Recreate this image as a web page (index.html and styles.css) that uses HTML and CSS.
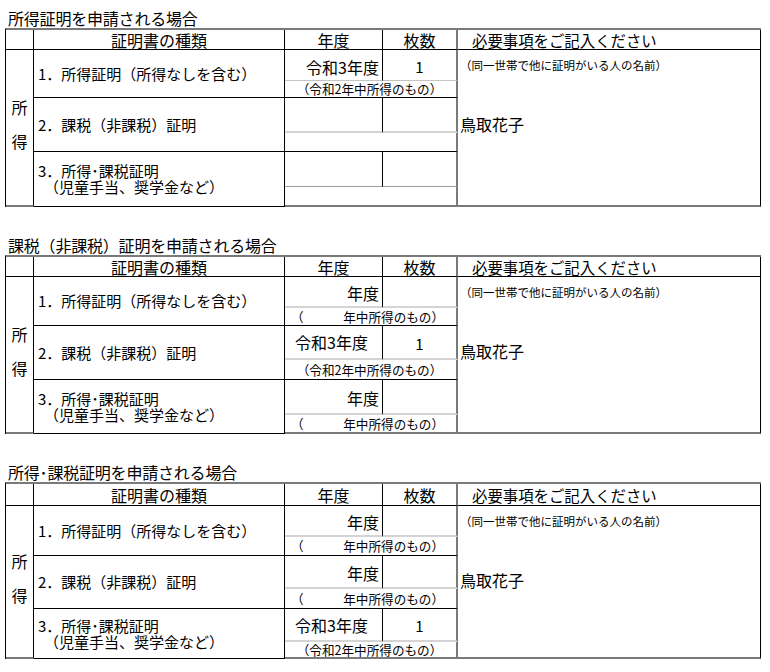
FILE: index.html
```html
<!DOCTYPE html>
<html lang="ja">
<head>
<meta charset="utf-8">
<title>証明書の種類</title>
<link rel="stylesheet" href="styles.css">
</head>
<body>
<div class="page">

  <section class="section">
    <div class="title">所得証明を申請される場合</div>
    <div class="sheet t1">
      <div class="c hd"></div>
      <div class="c hd">証明書の種類</div>
      <div class="c hd">年度</div>
      <div class="c hd thick">枚数</div>
      <div class="c hd left">必要事項をご記入ください</div>

      <div class="c vlabel bottom"><span>所</span><span>得</span></div>
      <div class="c item"><span class="line1">1．所得証明（所得なしを含む）</span></div>
      <div class="c year div-thin">令和3年度</div>
      <div class="c count thick div-thin">1</div>
      <div class="c notes bottom">
        <div class="hint">（同一世帯で他に証明がいる人の名前）</div>
        <div class="name">鳥取花子</div>
      </div>
      <div class="c sub thick filled">（令和2年中所得のもの）</div>

      <div class="c item"><span class="line1">2．課税（非課税）証明</span></div>
      <div class="c year"></div>
      <div class="c count thick"></div>
      <div class="c sub thick"></div>

      <div class="c item"><span class="line1">3．所得･課税証明</span><span class="line2">（児童手当、奨学金など）</span></div>
      <div class="c year div-mid"></div>
      <div class="c count thick div-mid"></div>
      <div class="c sub thick bottom"></div>
    </div>
  </section>

  <section class="section">
    <div class="title">課税（非課税）証明を申請される場合</div>
    <div class="sheet t2">
      <div class="c hd"></div>
      <div class="c hd">証明書の種類</div>
      <div class="c hd">年度</div>
      <div class="c hd thick">枚数</div>
      <div class="c hd left">必要事項をご記入ください</div>

      <div class="c vlabel bottom"><span>所</span><span>得</span></div>
      <div class="c item"><span class="line1">1．所得証明（所得なしを含む）</span></div>
      <div class="c year">年度</div>
      <div class="c count thick"></div>
      <div class="c notes bottom">
        <div class="hint">（同一世帯で他に証明がいる人の名前）</div>
        <div class="name">鳥取花子</div>
      </div>
      <div class="c sub thick blank"><span>（</span><span>年中所得のもの）</span></div>

      <div class="c item"><span class="line1">2．課税（非課税）証明</span></div>
      <div class="c year centered">令和3年度</div>
      <div class="c count thick">1</div>
      <div class="c sub thick filled">（令和2年中所得のもの）</div>

      <div class="c item"><span class="line1">3．所得･課税証明</span><span class="line2">（児童手当、奨学金など）</span></div>
      <div class="c year">年度</div>
      <div class="c count thick"></div>
      <div class="c sub thick bottom blank"><span>（</span><span>年中所得のもの）</span></div>
    </div>
  </section>

  <section class="section">
    <div class="title">所得･課税証明を申請される場合</div>
    <div class="sheet t3">
      <div class="c hd"></div>
      <div class="c hd">証明書の種類</div>
      <div class="c hd">年度</div>
      <div class="c hd thick">枚数</div>
      <div class="c hd left">必要事項をご記入ください</div>

      <div class="c vlabel bottom"><span>所</span><span>得</span></div>
      <div class="c item"><span class="line1">1．所得証明（所得なしを含む）</span></div>
      <div class="c year">年度</div>
      <div class="c count thick"></div>
      <div class="c notes bottom">
        <div class="hint">（同一世帯で他に証明がいる人の名前）</div>
        <div class="name">鳥取花子</div>
      </div>
      <div class="c sub thick blank"><span>（</span><span>年中所得のもの）</span></div>

      <div class="c item"><span class="line1">2．課税（非課税）証明</span></div>
      <div class="c year">年度</div>
      <div class="c count thick"></div>
      <div class="c sub thick blank"><span>（</span><span>年中所得のもの）</span></div>

      <div class="c item"><span class="line1">3．所得･課税証明</span><span class="line2">（児童手当、奨学金など）</span></div>
      <div class="c year centered">令和3年度</div>
      <div class="c count thick">1</div>
      <div class="c sub thick bottom filled">（令和2年中所得のもの）</div>
    </div>
  </section>

</div>
</body>
</html>
```

FILE: styles.css
```css
html, body {
  margin: 0;
  padding: 0;
  background: #ffffff;
}

body {
  font-family: "Noto Sans CJK JP", "Noto Sans", sans-serif;
  color: #000000;
}

.page {
  padding: 9px 0 0 5px;
}

.section + .section {
  margin-top: 29px;
}

.title {
  font-size: 16px;
  line-height: 19px;
  height: 19px;
  padding-left: 3px;
  white-space: nowrap;
  letter-spacing: -0.2px;
}

.sheet {
  display: grid;
  width: 756px;
  grid-template-columns: 28px 251px 98px 75px 303px;
  border-top: 2px solid #7a7a7a;
  border-left: 1px solid #000000;
  box-sizing: border-box;
}

.t1 { grid-template-rows: 20px 31px 17px 35px 19px 35px 20px; }
.t2 { grid-template-rows: 20px 31px 18px 34px 20px 35px 19px; }
.t3 { grid-template-rows: 22px 31px 19px 33px 20px 33px 17px; }

.c {
  box-sizing: border-box;
  border-right: 1px solid #000000;
  border-bottom: 1px solid #000000;
  min-width: 0;
  overflow: visible;
}

.thick {
  border-right: 2px solid #7a7a7a;
}

.bottom {
  border-bottom: 2px solid #7a7a7a;
}

.hd {
  display: flex;
  align-items: center;
  justify-content: center;
  font-size: 16px;
  line-height: 18px;
  white-space: nowrap;
}

.hd.left {
  justify-content: flex-start;
  padding-left: 14px;
  font-size: 15.4px;
}

.vlabel {
  grid-row: span 6;
  display: flex;
  flex-direction: column;
  align-items: center;
  justify-content: center;
  font-size: 16px;
  line-height: 34px;
  padding-bottom: 8px;
}

.item {
  grid-row: span 2;
  display: flex;
  flex-direction: column;
  justify-content: center;
  padding-left: 4px;
  font-size: 15px;
  white-space: nowrap;
}

.item .line1,
.item .line2 {
  display: block;
  height: 16px;
  line-height: 16px;
}

.item .line2 {
  padding-left: 6px;
}

.year {
  display: flex;
  align-items: center;
  justify-content: flex-end;
  padding: 3px 3px 0 0;
  font-size: 16px;
  line-height: 20px;
  white-space: nowrap;
  border-bottom: 2px solid #d4d4d4;
}

.year.centered {
  justify-content: center;
  padding: 0 4px 0 0;
}

.count {
  display: flex;
  align-items: center;
  justify-content: center;
  padding-top: 3px;
  font-size: 15px;
  line-height: 20px;
  border-bottom: 2px solid #d4d4d4;
}

.div-thin {
  border-bottom: 1px solid #c4c4c4;
}

.div-mid {
  border-bottom: 1px solid #9c9c9c;
}

.sub {
  grid-column: span 2;
  display: flex;
  align-items: center;
  font-size: 12.6px;
  line-height: 16px;
  white-space: nowrap;
}

.sub.filled {
  justify-content: center;
  padding-right: 2px;
}

.sub.blank {
  justify-content: space-between;
  padding: 0 12px 0 6px;
}

.notes {
  grid-row: span 6;
  padding: 8px 0 0 2px;
}

.hint {
  font-size: 11.5px;
  line-height: 14px;
  white-space: nowrap;
}

.name {
  margin-top: 42px;
  font-size: 16px;
  line-height: 20px;
}
```
